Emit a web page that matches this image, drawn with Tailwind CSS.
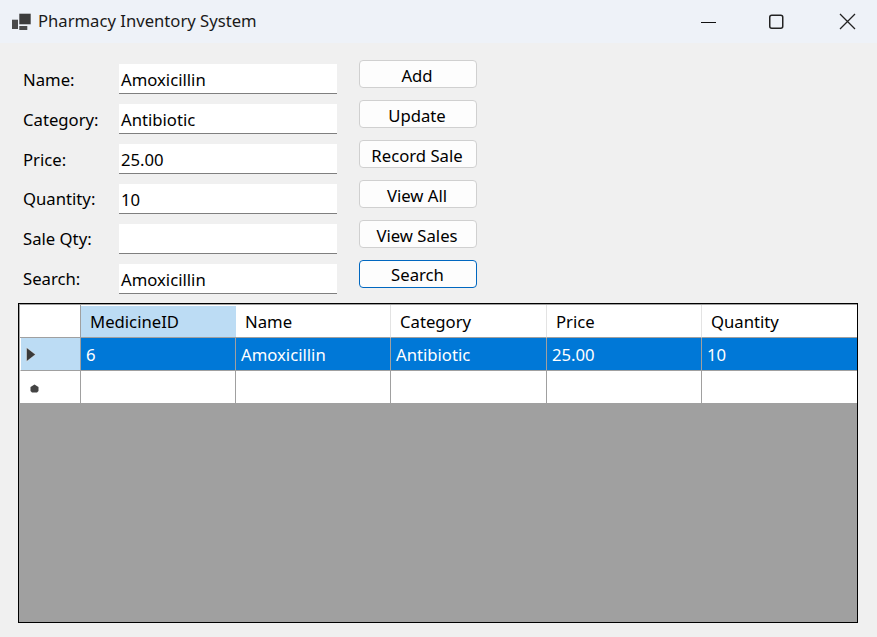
<!DOCTYPE html>
<html>
<head>
<meta charset="utf-8">
<script src="https://cdn.jsdelivr.net/npm/@tailwindcss/browser@4"></script>
</head>
<body class="w-[877px] h-[637px] overflow-hidden bg-[#f0f0f0] font-['Noto_Sans',sans-serif] text-[16.7px] text-black">
  <!-- title bar -->
  <div class="h-[43px] bg-[#eef2f8] flex items-center">
    <svg class="ml-[12px] w-[19px] h-[17px] shrink-0" viewBox="0 0 19 17"><path fill="#3c3c3c" d="M7.300.7h11.400v10.600H7.300z"/><path fill="#4a4a4a" d="M0 6.700h6v9.300H0z"/><path fill="#4a4a4a" d="M7.300 13h8v4.200h-8z"/></svg>
    <span class="ml-[7px] text-[16.650px] text-[#1a1a1a]">Pharmacy Inventory System</span>
    <svg class="ml-auto w-[16px] h-[16px]" viewBox="0 0 16 16"><path d="M1 8.500h15" stroke="#111" stroke-width="1"/></svg>
    <svg class="ml-[52px] w-[16px] h-[16px]" viewBox="0 0 16 16"><rect x="1.750" y="1.250" width="13" height="13" rx="2" fill="none" stroke="#222" stroke-width="1.500"/></svg>
    <svg class="ml-[55px] mr-[21px] w-[17px] h-[17px]" viewBox="0 0 17 17"><path d="M1 1l15 15M16 1L1 16" stroke="#222" stroke-width="1.300" fill="none"/></svg>
  </div>

  <!-- form -->
  <div class="flex h-[260px]">
    <div class="w-[119px] pl-[23px] pt-[21px] flex flex-col">
      <div class="h-[40px] leading-[32px]">Name:</div>
      <div class="h-[40px] leading-[32px]">Category:</div>
      <div class="h-[40px] leading-[32px]">Price:</div>
      <div class="h-[40px] leading-[32px]">Quantity:</div>
      <div class="h-[40px] leading-[32px]">Sale Qty:</div>
      <div class="h-[40px] leading-[32px]">Search:</div>
    </div>
    <div class="w-[218px] pt-[21px] flex flex-col gap-[10px]">
      <div class="h-[30px] bg-white border-b border-[#7f7f7f] pl-[2px] leading-[31px]">Amoxicillin</div>
      <div class="h-[30px] bg-white border-b border-[#7f7f7f] pl-[2px] leading-[31px]">Antibiotic</div>
      <div class="h-[30px] bg-white border-b border-[#7f7f7f] pl-[2px] leading-[31px]">25.00</div>
      <div class="h-[30px] bg-white border-b border-[#7f7f7f] pl-[2px] leading-[31px]">10</div>
      <div class="h-[30px] bg-white border-b border-[#7f7f7f] pl-[2px] leading-[31px]"></div>
      <div class="h-[30px] bg-white border-b border-[#7f7f7f] pl-[2px] leading-[31px]">Amoxicillin</div>
    </div>
    <div class="ml-[22px] w-[118px] pt-[17px] flex flex-col gap-[12px]">
      <div class="h-[28px] bg-[#fdfdfd] border border-[#d0d0d0] rounded-[4px] pr-[2px] text-center leading-[30px]">Add</div>
      <div class="h-[28px] bg-[#fdfdfd] border border-[#d0d0d0] rounded-[4px] pr-[2px] text-center leading-[30px]">Update</div>
      <div class="h-[28px] bg-[#fdfdfd] border border-[#d0d0d0] rounded-[4px] pr-[2px] text-center leading-[30px]">Record Sale</div>
      <div class="h-[28px] bg-[#fdfdfd] border border-[#d0d0d0] rounded-[4px] pr-[2px] text-center leading-[30px]">View All</div>
      <div class="h-[28px] bg-[#fdfdfd] border border-[#d0d0d0] rounded-[4px] pr-[2px] text-center leading-[30px]">View Sales</div>
      <div class="h-[28px] bg-[#fdfdfd] border border-[#0067c0] rounded-[4px] pr-[1px] text-center leading-[28px]">Search</div>
    </div>
  </div>

  <!-- data grid -->
  <div class="ml-[18px] w-[840px] h-[320px] border border-black bg-[#a0a0a0] pl-[1px] pt-[1px]">
    <div class="grid grid-cols-[61px_155px_155px_156px_155px_155px] grid-rows-[33px_33px_32px]">
      <div class="bg-white border-r border-b border-[#a0a0a0]"></div>
      <div class="bg-[#bcdcf4] border-t border-t-white border-b border-b-[#a0a0a0] pl-[9px] leading-[32px]">MedicineID</div>
      <div class="bg-white border-r border-b border-r-[#e3e3e3] border-b-[#a0a0a0] pl-[9px] leading-[33px]">Name</div>
      <div class="bg-white border-r border-b border-r-[#e3e3e3] border-b-[#a0a0a0] pl-[9px] leading-[33px]">Category</div>
      <div class="bg-white border-r border-b border-r-[#e3e3e3] border-b-[#a0a0a0] pl-[9px] leading-[33px]">Price</div>
      <div class="bg-white border-b border-[#a0a0a0] pl-[9px] leading-[33px]">Quantity</div>

      <div class="bg-[#bcdcf4] border-l border-l-white border-r border-b border-r-[#a0a0a0] border-b-[#a0a0a0] flex items-center pl-[5px]">
        <svg class="w-[10px] h-[15px]" viewBox="0 0 10 15"><path d="M.5.5l9 7-9 7z" fill="#3a3a3a" stroke="#fff" stroke-opacity=".6" stroke-width=".7"/></svg>
      </div>
      <div class="bg-[#0078d7] text-white border-r border-b border-[#a0a0a0] pl-[5px] leading-[33px]">6</div>
      <div class="bg-[#0078d7] text-white border-r border-b border-[#a0a0a0] pl-[5px] leading-[33px]">Amoxicillin</div>
      <div class="bg-[#0078d7] text-white border-r border-b border-[#a0a0a0] pl-[5px] leading-[33px]">Antibiotic</div>
      <div class="bg-[#0078d7] text-white border-r border-b border-[#a0a0a0] pl-[5px] leading-[33px]">25.00</div>
      <div class="bg-[#0078d7] text-white border-b border-[#a0a0a0] pl-[5px] leading-[33px]">10</div>

      <div class="bg-white border-r border-[#a0a0a0] flex items-center pl-[10px]">
        <svg class="w-[9px] h-[9px] mt-[3px]" viewBox="0 0 9 9"><path d="M4.500.5L8.500 3V7L7 8.500H2L.5 7V3z" fill="#444"/></svg>
      </div>
      <div class="bg-white border-r border-[#a0a0a0]"></div>
      <div class="bg-white border-r border-[#a0a0a0]"></div>
      <div class="bg-white border-r border-[#a0a0a0]"></div>
      <div class="bg-white border-r border-[#a0a0a0]"></div>
      <div class="bg-white"></div>
    </div>
  </div>
</body>
</html>
